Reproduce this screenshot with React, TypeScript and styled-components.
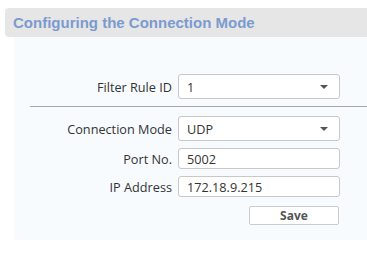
import styled, { createGlobalStyle } from 'styled-components';

const GlobalStyle = createGlobalStyle`
    html, body {
        margin: 0;
        padding: 0;
        background: #ffffff;
    }
`;

const Page = styled.div`
    padding-top: 8px;
    font-family: "Open Sans", "Noto Sans", sans-serif;
`;

const Header = styled.div`
    margin-left: 5px;
    height: 29px;
    background: #e6e6e6;
    border-radius: 4px 0 0 4px;
    display: flex;
    align-items: center;
    padding-left: 8px;
    font-family: "Liberation Sans", Arial, sans-serif;
    font-weight: bold;
    font-size: 15px;
    color: #7b9bcf;
`;

const Panel = styled.div`
    margin-left: 14px;
    height: 203px;
    background: #f7fbfe;
    padding-top: 37px;
    box-sizing: border-box;
`;

const Row = styled.div<{ $h: number; $mb: number }>`
    display: flex;
    align-items: center;
    height: ${(p) => p.$h}px;
    margin-bottom: ${(p) => p.$mb}px;
`;

const Label = styled.div`
    width: 164px;
    padding-right: 6px;
    box-sizing: border-box;
    text-align: right;
    font-size: 12.7px;
    color: #333333;
`;

const Field = styled.div`
    width: 162px;
    height: 100%;
    box-sizing: border-box;
    border: 1px solid #c8c8c8;
    border-radius: 3px;
    background: #ffffff;
    display: flex;
    align-items: center;
    padding: 0 8px;
    font-size: 12.7px;
    color: #333333;
`;

const Value = styled.span`
    flex: 1;
`;

const Arrow = styled.span`
    width: 0;
    height: 0;
    border-left: 4px solid transparent;
    border-right: 4px solid transparent;
    border-top: 4px solid #555555;
    margin-right: 3px;
`;

const Divider = styled.div`
    margin-left: 16px;
    height: 1px;
    background: #a8a8a8;
    margin-bottom: 9px;
`;

const ButtonRow = styled.div`
    display: flex;
    padding-left: 235px;
    margin-top: 9px;
`;

const SaveButton = styled.button`
    width: 90px;
    height: 19px;
    padding: 0;
    border: 1px solid #cccccc;
    border-radius: 2px;
    background: #ffffff;
    font-family: "Open Sans", "Noto Sans", sans-serif;
    font-weight: bold;
    font-size: 12px;
    color: #555555;
`;

function Select({ label, value, h, mb }: { label: string; value: string; h: number; mb: number }) {
    return (
        <Row $h={h} $mb={mb}>
            <Label>{label}</Label>
            <Field>
                <Value>{value}</Value>
                <Arrow />
            </Field>
        </Row>
    );
}

function Input({ label, value, mb }: { label: string; value: string; mb: number }) {
    return (
        <Row $h={21} $mb={mb}>
            <Label>{label}</Label>
            <Field>
                <Value>{value}</Value>
            </Field>
        </Row>
    );
}

export default function App() {
    return (
        <Page>
            <GlobalStyle />
            <Header>Configuring the Connection Mode</Header>
            <Panel>
                <Select label="Filter Rule ID" value="1" h={25} mb={7} />
                <Divider />
                <Select label="Connection Mode" value="UDP" h={25} mb={7} />
                <Input label="Port No." value="5002" mb={7} />
                <Input label="IP Address" value="172.18.9.215" mb={0} />
                <ButtonRow>
                    <SaveButton>Save</SaveButton>
                </ButtonRow>
            </Panel>
        </Page>
    );
}
